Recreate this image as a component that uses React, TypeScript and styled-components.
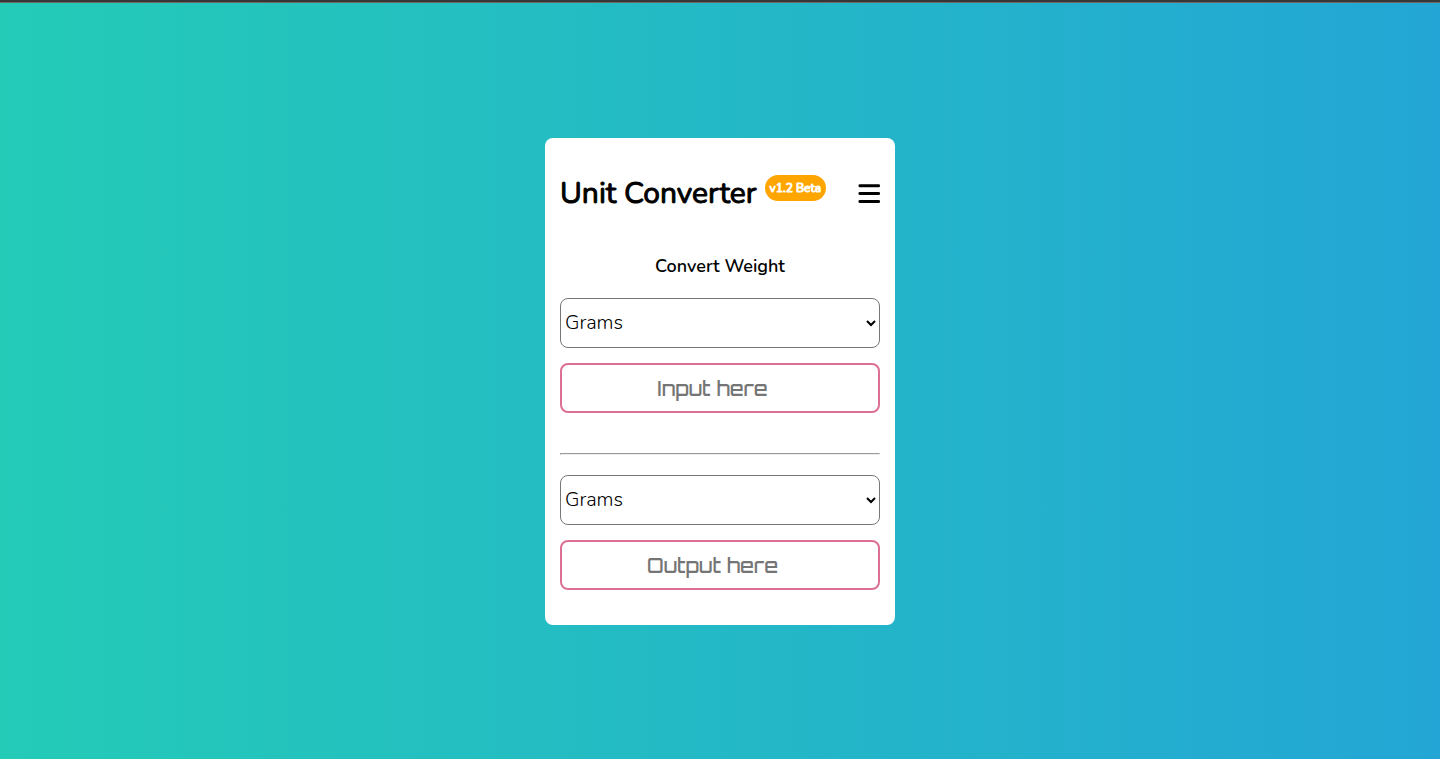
import { useState } from "react";
import styled, { createGlobalStyle } from "styled-components";

const GlobalStyle = createGlobalStyle`
  *, *::before, *::after {
    box-sizing: border-box;
  }
  body {
    margin: 0;
    font-family: Nunito, Lato, sans-serif;
    color: #000;
  }
`;

const Page = styled.div`
  min-height: 100vh;
  display: flex;
  align-items: center;
  justify-content: center;
  padding-top: 1px;
  border-top: 2px solid #373737;
  box-shadow: inset 0 1px #6b6866;
  background: linear-gradient(to right, #24cbb7, #23a6d5) padding-box;
`;

const Card = styled.main`
  width: 100%;
  max-width: 350px;
  padding: 35px 15px;
  border-radius: 8px;
  background: #fff;
`;

const Header = styled.header`
  display: flex;
  align-items: center;
  height: 42px;
`;

const Title = styled.h1`
  margin: 0;
  font-size: 30px;
  line-height: 42px;
  font-weight: 400;
  -webkit-text-stroke: 1px currentColor;
  white-space: nowrap;
`;

const Badge = styled.span`
  align-self: flex-start;
  margin: 2px auto 0 8px;
  padding: 0 5px;
  border-radius: 13px;
  background: orange;
  color: #fff;
  font-size: 12px;
  line-height: 26px;
  font-weight: 400;
  -webkit-text-stroke: 1px currentColor;
  white-space: nowrap;
`;

const MenuButton = styled.button`
  display: flex;
  padding: 0;
  border: 0;
  background: none;
  color: inherit;
  cursor: pointer;
`;

const Subtitle = styled.h2`
  margin: 38px 0 18px;
  font-size: 18px;
  line-height: 27px;
  font-weight: 600;
  text-align: center;
`;

const Fields = styled.div`
  display: grid;
  gap: 15px;
`;

const UnitSelect = styled.select`
  width: 100%;
  height: 50px;
  border: 1px solid #767676;
  border-radius: 8px;
  background: #fff;
  color: #000;
  font-family: inherit;
  font-weight: 300;
  font-size: 20px;
`;

const ValueInput = styled.input`
  width: 100%;
  height: 50px;
  padding: 3px 2px 1px;
  border: 2px solid palevioletred;
  border-radius: 8px;
  background: #fff;
  font-family: Orbitron, "DejaVu Sans", sans-serif;
  font-size: 20px;
  font-weight: 500;
  text-align: center;

  &::placeholder {
    color: #757575;
  }
`;

const Divider = styled.hr`
  margin: 40px 0 20px;
`;

const UNITS = [
  { name: "Grams", grams: 1 },
  { name: "Kilograms", grams: 1000 },
  { name: "Pounds", grams: 453.59237 },
  { name: "Ounces", grams: 28.349523125 },
];

type UnitPickerProps = {
  label: string;
  value: number;
  onChange: (value: number) => void;
};

function UnitPicker({ label, value, onChange }: UnitPickerProps) {
  return (
    <UnitSelect
      aria-label={label}
      value={value}
      onChange={(event) => onChange(Number(event.target.value))}
    >
      {UNITS.map((unit) => (
        <option key={unit.name} value={unit.grams}>
          {unit.name}
        </option>
      ))}
    </UnitSelect>
  );
}

export default function App() {
  const [from, setFrom] = useState(1);
  const [to, setTo] = useState(1);
  const [amount, setAmount] = useState("");
  const result = amount === "" ? "" : String((Number(amount) * from) / to);

  return (
    <>
      <GlobalStyle />
      <Page>
        <Card>
          <Header>
            <Title>Unit Converter</Title>
            <Badge>v1.2 Beta</Badge>
            <MenuButton type="button" aria-label="Menu">
              <svg width="22" height="20" viewBox="0 0 22 20" aria-hidden="true">
                <rect x="0.5" y="0.3" width="21.5" height="2.9" rx="1.3" />
                <rect x="0.5" y="8" width="21.5" height="3" rx="1.3" />
                <rect x="0.5" y="16" width="21.5" height="3" rx="1.3" />
              </svg>
            </MenuButton>
          </Header>
          <Subtitle>Convert Weight</Subtitle>
          <Fields>
            <UnitPicker label="Convert from" value={from} onChange={setFrom} />
            <ValueInput
              type="number"
              aria-label="Amount"
              placeholder="Input here"
              value={amount}
              onChange={(event) => setAmount(event.target.value)}
            />
          </Fields>
          <Divider />
          <Fields>
            <UnitPicker label="Convert to" value={to} onChange={setTo} />
            <ValueInput
              type="number"
              aria-label="Result"
              placeholder="Output here"
              value={result}
              readOnly
            />
          </Fields>
        </Card>
      </Page>
    </>
  );
}
